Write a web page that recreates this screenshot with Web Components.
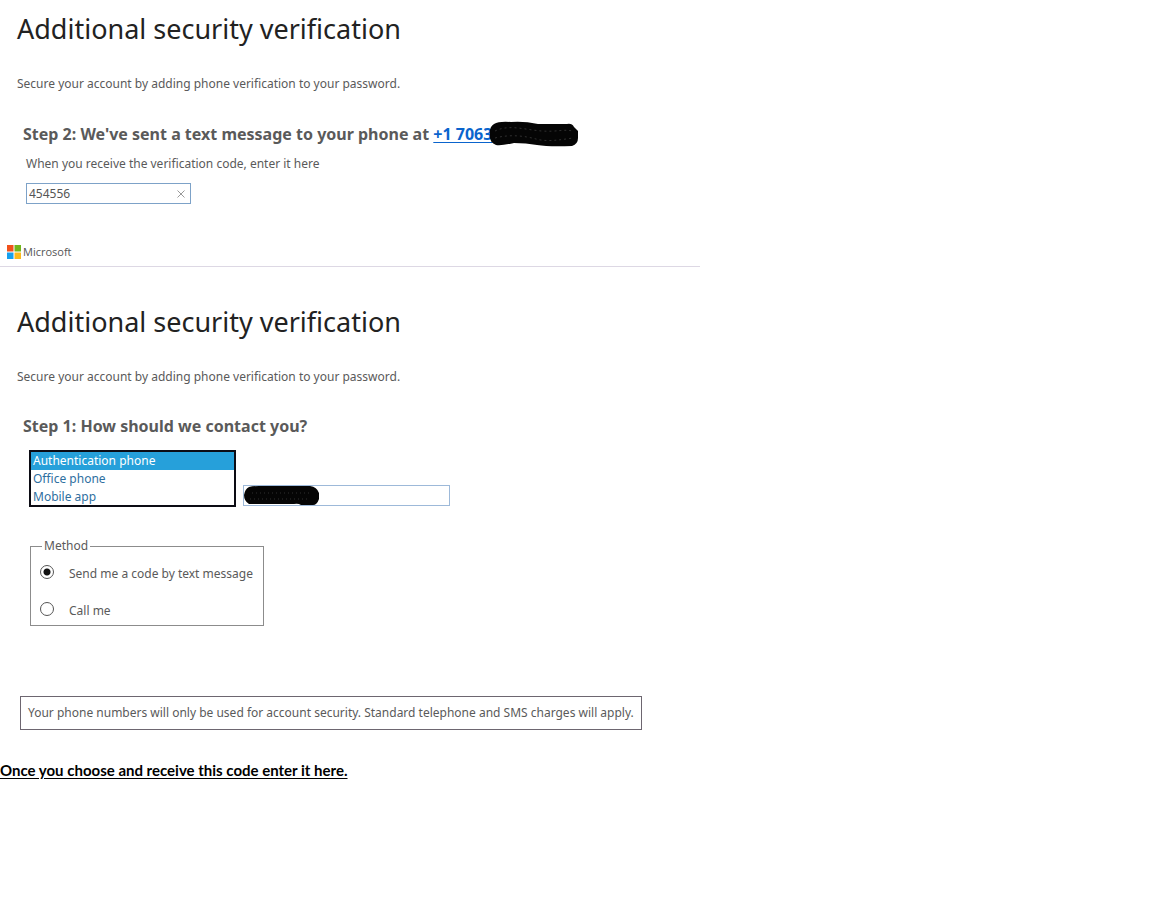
<!DOCTYPE html>
<html lang="en">
<head>
<meta charset="utf-8">
<title>Additional security verification</title>
<style>
body { margin: 0; background: #fff; color: #5a5a5a; font: 13px/20px "Noto Sans", "Open Sans", sans-serif; }
</style>
</head>
<body>
<verification-guide></verification-guide>
<script>
const define = (name, html) => customElements.define(name, class extends HTMLElement {
  constructor() {
    super();
    this.attachShadow({ mode: 'open' }).innerHTML = html;
  }
});

define('page-intro', `
<style>
:host { display: block; padding: 0 17px; }
h1 { margin: 0 0 25px; color: #222; font-size: 27px; line-height: 40px; font-weight: 400; }
p { margin: 0; font-size: 12px; }
</style>
<h1><slot name="title"></slot></h1>
<p><slot></slot></p>`);

define('step-heading', `
<style>
:host { display: block; }
h2 { display: flex; align-items: center; margin: 0; font-size: 16px; line-height: 24px; font-weight: 700; white-space: pre; }
</style>
<h2><slot></slot></h2>`);

define('hidden-number', `
<style>
:host { display: block; white-space: normal; }
svg { display: block; }
</style>
<svg width="89" height="26" viewBox="0 0 89 26" aria-hidden="true">
<path d="M5 3 Q10 0 22 1 Q35 0 49 3 L78 3 Q83 2 85 6 L89 10 V17 Q89 23 83 25 Q60 26 48 24 Q37 22 25 22 Q12 25 7 24 Q0 21 1 14 Q0 6 5 3Z" fill="#050505"/>
<path d="M6 10 C20 3 37 9 53 10 S73 8 84 10 M6 17 C21 13 36 15 47 18 S70 19 84 17" fill="none" stroke="#303030" stroke-dasharray="2 3"/>
</svg>`);

define('sent-number', `
<style>
:host { display: flex; align-items: center; position: relative; white-space: normal; }
a { color: #0a64cd; text-underline-offset: 2px; }
hidden-number { position: absolute; left: 56px; top: -1px; }
</style>
<a href="#code">+1 7063</a><hidden-number></hidden-number>`);

define('code-field', `
<style>
:host { display: block; }
label { display: block; margin-bottom: 9px; font-size: 12px; }
.box { display: flex; align-items: center; box-sizing: border-box; width: 165px; height: 21px; border: 1px solid #7da2c8; }
input { flex: 1; min-width: 0; padding: 0 2px; border: 0; outline: 0; background: none; color: #555; font: inherit; font-size: 12px; }
button { display: flex; padding: 0 5px; border: 0; background: none; }
</style>
<label for="code">When you receive the verification code, enter it here</label>
<div class="box"><input id="code" value="454556"><button type="button" aria-label="Clear"><svg width="8" height="8" viewBox="0 0 8 8"><path d="M.5 .5 7.5 7.5M7.5 .5 .5 7.5" stroke="#999" fill="none"/></svg></button></div>`);

define('brand-bar', `
<style>
:host { display: flex; align-items: center; gap: 2px; height: 29px; padding-left: 7px; border-bottom: 1px solid #ddd8e4; font-family: "Open Sans", sans-serif; font-size: 11px; font-weight: 500; color: #555; }
svg { display: block; }
</style>
<svg width="14" height="14" viewBox="0 0 14 14" aria-hidden="true"><path fill="#f1511b" d="M0 0h6.5v6.5H0z"/><path fill="#71b51b" d="M7.5 0H14v6.5H7.5z"/><path fill="#16a0ee" d="M0 7.5h6.5V14H0z"/><path fill="#fbb91c" d="M7.5 7.5H14V14H7.5z"/></svg>
<span>Microsoft</span>`);

define('contact-picker', `
<style>
:host { display: flex; align-items: flex-end; gap: 7px; }
select { box-sizing: border-box; width: 207px; height: 57px; padding: 0; border: 2px solid #0c0c14; border-radius: 0; outline: 0; overflow: hidden; background: #fff; font: 12px/18px "Noto Sans", sans-serif; scrollbar-width: none; }
option { min-height: 0; height: 18px; padding: 0 2px; color: #2f6f9f; line-height: 18px; }
option:checked { color: #fff; background: linear-gradient(#26a0da, #26a0da); }
.phone { position: relative; box-sizing: border-box; width: 207px; height: 21px; margin-bottom: 1px; }
input { display: block; width: 100%; height: 100%; box-sizing: border-box; border: 1px solid #9db9d9; padding: 0 2px; background: #fff; outline: 0; }
svg { position: absolute; left: 1px; top: 1px; }
</style>
<select size="3" aria-label="Contact method"><option selected>Authentication phone</option><option>Office phone</option><option>Mobile app</option></select>
<div class="phone"><input type="tel" aria-label="Phone number"><svg width="76" height="20" viewBox="0 0 76 20" aria-hidden="true"><path d="M5 1 Q9 0 15 0 H66 Q73 1 75 7 V13 Q73 19 69 19 H57 Q54 17 50 18 H5 Q0 15 0 9 Q1 3 5 1Z" fill="#050505"/><path d="M8 7H68M6 13H66" stroke="#303030" stroke-dasharray="1 3"/></svg></div>`);

define('method-choice', `
<style>
:host { display: block; }
fieldset { box-sizing: border-box; width: 234px; height: 90px; margin: 0; padding: 8px 9px 0; border: 1px solid #8c8c8c; }
legend { margin-left: 2px; padding: 0 2px; font-size: 12px; line-height: 20px; }
label { display: flex; align-items: center; gap: 15px; margin-bottom: 17px; font-size: 12px; white-space: nowrap; }
input { appearance: none; box-sizing: border-box; flex: none; width: 14px; height: 14px; margin: 0 0 4px; border: 1px solid #555; border-radius: 50%; background: #fff; }
input:checked { background: radial-gradient(circle, #111 0 3px, #fff 4px); }
</style>
<fieldset><legend>Method</legend>
<label><input type="radio" name="method" checked>Send me a code by text message</label>
<label><input type="radio" name="method">Call me</label>
</fieldset>`);

define('charge-notice', `
<style>
:host { display: flex; align-items: center; box-sizing: border-box; width: fit-content; height: 34px; padding: 0 7px; border: 1px solid #6d6670; font-size: 12px; }
</style>
<slot></slot>`);

define('verification-guide', `
<style>
:host { display: block; }
main { padding-top: 9px; }
.code { padding: 28px 23px 33px; }
code-field { margin: 8px 3px 0; }
brand-bar { max-width: 693px; }
.contact { padding: 27px 20px 0; }
.contact step-heading { margin-left: 3px; }
contact-picker { margin: 12px 9px 0; }
method-choice { margin: 29px 10px 70px; }
.next { margin: 30px 0 0; color: #000; font: 700 15px/20px Lato, sans-serif; }
u { text-underline-offset: 2px; }
.second { margin-top: 35px; }
</style>
<main>
<page-intro><span slot="title">Additional security verification</span>Secure your account by adding phone verification to your password.</page-intro>
<section class="code"><step-heading>Step 2: We've sent a text message to your phone at <sent-number></sent-number></step-heading><code-field></code-field></section>
<brand-bar></brand-bar>
<page-intro class="second"><span slot="title">Additional security verification</span>Secure your account by adding phone verification to your password.</page-intro>
<section class="contact"><step-heading>Step 1: How should we contact you?</step-heading>
<contact-picker></contact-picker>
<method-choice></method-choice>
<charge-notice>Your phone numbers will only be used for account security. Standard telephone and SMS charges will apply.</charge-notice></section>
<p class="next"><u>Once you choose and receive this code enter it here.</u></p>
</main>`);
</script>
</body>
</html>
